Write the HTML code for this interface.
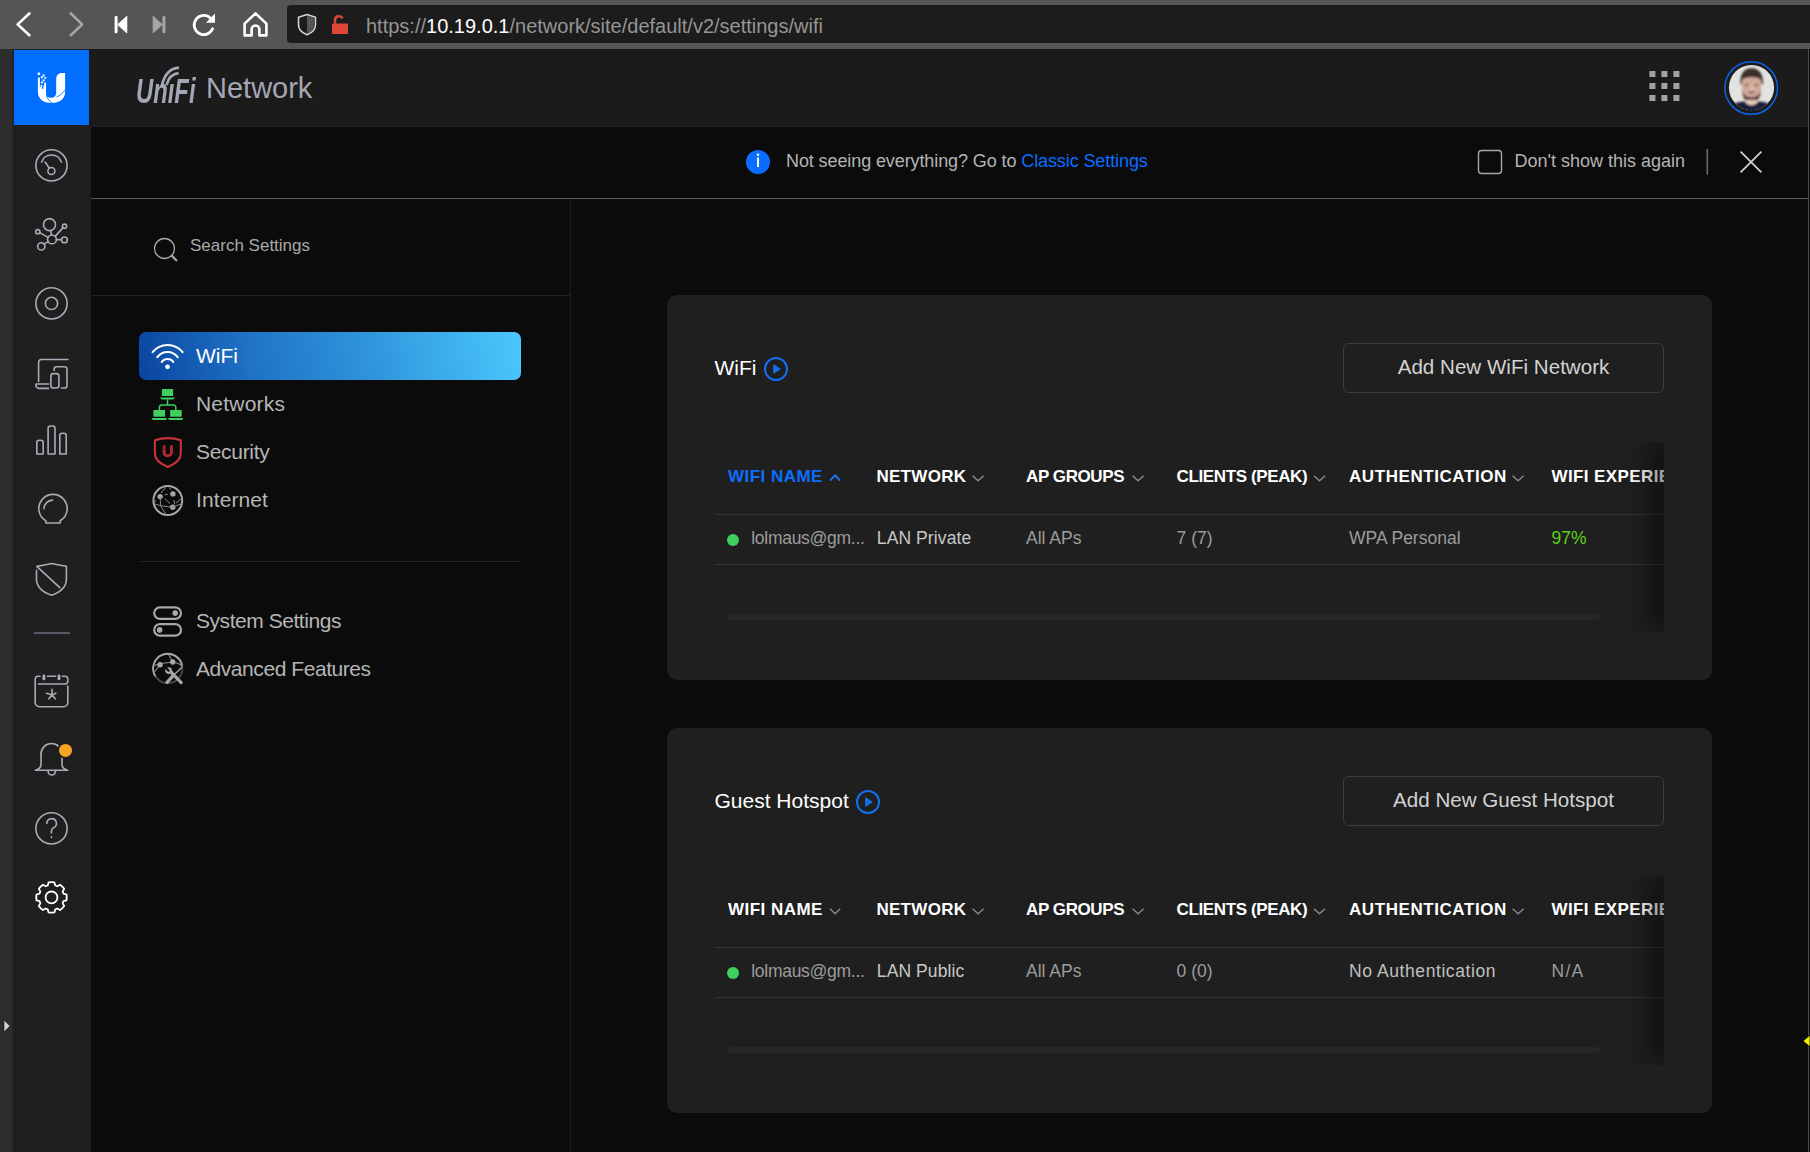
<!DOCTYPE html>
<html><head><meta charset="utf-8"><title>UniFi Network - WiFi</title>
<style>
html,body{margin:0;padding:0;}
body{width:1810px;height:1152px;overflow:hidden;background:#0b0b0b;position:relative;font-family:"Liberation Sans",sans-serif;}
.r{position:absolute;}
.t{position:absolute;white-space:nowrap;line-height:1;}
svg{position:absolute;left:0;top:0;}
</style></head><body>
<div class="r" style="left:0px;top:0px;width:1810px;height:49px;background:#555555;"></div>
<div class="r" style="left:287px;top:5px;width:1523px;height:38px;background:#1c1c1c;border-radius:4px 0 0 4px;"></div>
<div class="t " style="left:366px;top:16.07px;font-size:20px;color:#9e9e9e;font-weight:normal;"><span style="color:#959595">https://</span><span style="color:#ffffff">10.19.0.1</span><span style="color:#959595">/network/site/default/v2/settings/wifi</span></div>
<div class="r" style="left:0px;top:49px;width:12px;height:1103px;background:#2d2d2d;"></div>
<div class="r" style="left:12px;top:49px;width:2px;height:1103px;background:#232323;"></div>
<div class="r" style="left:14px;top:49px;width:76px;height:1103px;background:#1f1f1f;"></div>
<div class="r" style="left:90px;top:49px;width:1px;height:1103px;background:#1c1c28;"></div>
<div class="r" style="left:14px;top:50px;width:75px;height:75px;background:#006fff;"></div>
<div class="r" style="left:89px;top:49px;width:1719px;height:76px;background:#1b1b1b;"></div>
<div class="r" style="left:89px;top:125px;width:1719px;height:2px;background:#1d1d25;"></div>
<div class="r" style="left:1808px;top:49px;width:1px;height:1103px;background:#4c4c4c;"></div>
<div class="t " style="left:135.5px;top:72.57px;font-size:35px;color:#a3a6b3;font-weight:bold;font-style:italic;transform:scaleX(0.68);transform-origin:0 0;">Un&#305;Fi</div>
<div class="t " style="left:206px;top:74.45px;font-size:29px;color:#a3a6b3;font-weight:normal;">Network</div>
<div class="t " style="left:786px;top:152.46px;font-size:18px;color:#b4b4b4;font-weight:normal;letter-spacing:-0.1px;">Not seeing everything? Go to <span style="color:#0a6eff">Classic Settings</span></div>
<div class="t " style="left:1514.6px;top:151.56px;font-size:18px;color:#b4b4b4;font-weight:normal;">Don't show this again</div>
<div class="r" style="left:91px;top:198px;width:1717px;height:1px;background:#5a5a5a;"></div>
<div class="r" style="left:570px;top:199px;width:1px;height:953px;background:#1f1f1f;"></div>
<div class="r" style="left:91px;top:295px;width:479px;height:1px;background:#222222;"></div>
<div class="t " style="left:190px;top:237.21px;font-size:17px;color:#a9a9a9;font-weight:normal;">Search Settings</div>
<div class="r" style="left:139px;top:332px;width:382px;height:48px;background:linear-gradient(78deg,#0a45a0 0%,#1f73c6 30%,#2f95dc 60%,#4ac8fc 100%);border-radius:7px;"></div>
<div class="t " style="left:196px;top:345.32px;font-size:21px;color:#ffffff;font-weight:normal;">WiFi</div>
<div class="t " style="left:196px;top:393.22px;font-size:21px;color:#b6b6b6;font-weight:normal;letter-spacing:0.2px;">Networks</div>
<div class="t " style="left:196px;top:441.22px;font-size:21px;color:#b6b6b6;font-weight:normal;letter-spacing:-0.3px;">Security</div>
<div class="t " style="left:196px;top:489.22px;font-size:21px;color:#b6b6b6;font-weight:normal;letter-spacing:0.1px;">Internet</div>
<div class="t " style="left:196px;top:610.32px;font-size:21px;color:#b6b6b6;font-weight:normal;letter-spacing:-0.45px;">System Settings</div>
<div class="t " style="left:196px;top:658.02px;font-size:21px;color:#b6b6b6;font-weight:normal;letter-spacing:-0.44px;">Advanced Features</div>
<div class="r" style="left:139px;top:561px;width:382px;height:1px;background:#222222;"></div>
<div class="r" style="left:667px;top:295px;width:1045px;height:385px;background:#1f1f1f;border-radius:10px;"></div>
<div class="t " style="left:714.5px;top:357.22px;font-size:21px;color:#ffffff;font-weight:normal;">WiFi</div>
<div class="r" style="left:1343px;top:343px;width:321px;height:50px;background:transparent;box-sizing:border-box;border:1px solid #3d3d3d;border-radius:6px;"></div>
<div class="t" style="left:1343px;width:321px;text-align:center;top:356.56px;font-size:20.6px;color:#d2d2d2;">Add New WiFi Network</div>
<div class="t " style="left:728px;top:467.81px;font-size:17px;color:#0a6eff;font-weight:bold;letter-spacing:0.47px;">WIFI NAME</div>
<div class="t " style="left:876.4px;top:467.81px;font-size:17px;color:#ffffff;font-weight:bold;letter-spacing:0.3px;">NETWORK</div>
<div class="t " style="left:1026px;top:467.81px;font-size:17px;color:#ffffff;font-weight:bold;letter-spacing:-0.4px;">AP GROUPS</div>
<div class="t " style="left:1176.6px;top:467.81px;font-size:17px;color:#ffffff;font-weight:bold;letter-spacing:-0.38px;">CLIENTS (PEAK)</div>
<div class="t " style="left:1349px;top:467.81px;font-size:17px;color:#ffffff;font-weight:bold;letter-spacing:0.57px;">AUTHENTICATION</div>
<div class="t " style="left:1551.5px;top:467.81px;font-size:17px;color:#ffffff;font-weight:bold;letter-spacing:0.4px;">WIFI EXPERIE</div>
<div class="r" style="left:715px;top:514px;width:949px;height:1px;background:#333333;"></div>
<div class="r" style="left:715px;top:564px;width:949px;height:1px;background:#333333;"></div>
<div class="r" style="left:727px;top:534px;width:12px;height:12px;background:#3ecf5e;border-radius:50%;"></div>
<div class="t " style="left:751.2px;top:529.59px;font-size:17.5px;color:#9c9c9c;font-weight:normal;letter-spacing:-0.27px;">lolmaus@gm...</div>
<div class="t " style="left:876.8px;top:529.59px;font-size:17.5px;color:#c8c8c8;font-weight:normal;letter-spacing:0.1px;">LAN Private</div>
<div class="t " style="left:1026px;top:529.59px;font-size:17.5px;color:#9c9c9c;font-weight:normal;letter-spacing:0px;">All APs</div>
<div class="t " style="left:1176.6px;top:529.59px;font-size:17.5px;color:#9c9c9c;font-weight:normal;letter-spacing:0px;">7 (7)</div>
<div class="t " style="left:1349px;top:529.59px;font-size:17.5px;color:#9c9c9c;font-weight:normal;letter-spacing:0px;">WPA Personal</div>
<div class="t " style="left:1551.5px;top:529.59px;font-size:17.5px;color:#5bd41c;font-weight:normal;letter-spacing:0px;">97%</div>
<div class="r" style="left:727px;top:614px;width:873px;height:6px;background:#262626;border-radius:3px;"></div>
<div class="r" style="left:1564px;top:442px;width:100px;height:190px;overflow:hidden;"><div class="r" style="left:100px;top:0;width:30px;height:190px;background:#1f1f1f;box-shadow:-14px 0 26px rgba(0,0,0,0.5);"></div></div>
<div class="r" style="left:1664px;top:395px;width:48px;height:285px;background:#1f1f1f;border-radius:0 0 9px 0;"></div>
<div class="r" style="left:667px;top:728px;width:1045px;height:385px;background:#1f1f1f;border-radius:10px;"></div>
<div class="t " style="left:714.5px;top:790.22px;font-size:21px;color:#ffffff;font-weight:normal;">Guest Hotspot</div>
<div class="r" style="left:1343px;top:776px;width:321px;height:50px;background:transparent;box-sizing:border-box;border:1px solid #3d3d3d;border-radius:6px;"></div>
<div class="t" style="left:1343px;width:321px;text-align:center;top:789.56px;font-size:20.6px;color:#d2d2d2;">Add New Guest Hotspot</div>
<div class="t " style="left:728px;top:900.81px;font-size:17px;color:#ffffff;font-weight:bold;letter-spacing:0.47px;">WIFI NAME</div>
<div class="t " style="left:876.4px;top:900.81px;font-size:17px;color:#ffffff;font-weight:bold;letter-spacing:0.3px;">NETWORK</div>
<div class="t " style="left:1026px;top:900.81px;font-size:17px;color:#ffffff;font-weight:bold;letter-spacing:-0.4px;">AP GROUPS</div>
<div class="t " style="left:1176.6px;top:900.81px;font-size:17px;color:#ffffff;font-weight:bold;letter-spacing:-0.38px;">CLIENTS (PEAK)</div>
<div class="t " style="left:1349px;top:900.81px;font-size:17px;color:#ffffff;font-weight:bold;letter-spacing:0.57px;">AUTHENTICATION</div>
<div class="t " style="left:1551.5px;top:900.81px;font-size:17px;color:#ffffff;font-weight:bold;letter-spacing:0.4px;">WIFI EXPERIE</div>
<div class="r" style="left:715px;top:947px;width:949px;height:1px;background:#333333;"></div>
<div class="r" style="left:715px;top:997px;width:949px;height:1px;background:#333333;"></div>
<div class="r" style="left:727px;top:967px;width:12px;height:12px;background:#3ecf5e;border-radius:50%;"></div>
<div class="t " style="left:751.2px;top:962.59px;font-size:17.5px;color:#9c9c9c;font-weight:normal;letter-spacing:-0.27px;">lolmaus@gm...</div>
<div class="t " style="left:876.8px;top:962.59px;font-size:17.5px;color:#c8c8c8;font-weight:normal;letter-spacing:0.1px;">LAN Public</div>
<div class="t " style="left:1026px;top:962.59px;font-size:17.5px;color:#9c9c9c;font-weight:normal;letter-spacing:0px;">All APs</div>
<div class="t " style="left:1176.6px;top:962.59px;font-size:17.5px;color:#9c9c9c;font-weight:normal;letter-spacing:0px;">0 (0)</div>
<div class="t " style="left:1349px;top:962.59px;font-size:17.5px;color:#c0c0c0;font-weight:normal;letter-spacing:0.58px;">No Authentication</div>
<div class="t " style="left:1551.5px;top:962.59px;font-size:17.5px;color:#9c9c9c;font-weight:normal;letter-spacing:1.3px;">N/A</div>
<div class="r" style="left:727px;top:1047px;width:873px;height:6px;background:#262626;border-radius:3px;"></div>
<div class="r" style="left:1564px;top:875px;width:100px;height:190px;overflow:hidden;"><div class="r" style="left:100px;top:0;width:30px;height:190px;background:#1f1f1f;box-shadow:-14px 0 26px rgba(0,0,0,0.5);"></div></div>
<div class="r" style="left:1664px;top:828px;width:48px;height:285px;background:#1f1f1f;border-radius:0 0 9px 0;"></div>
<svg width="1810" height="1152" viewBox="0 0 1810 1152"><g fill="none" stroke="#ffffff" stroke-width="2.6" stroke-linecap="round" stroke-linejoin="round"><path d="M29.4 13.5 L17.6 24.4 L29.4 35.2"/></g><path d="M70.8 13.5 L82.2 24.4 L70.8 35.2" fill="none" stroke="#a6a6a6" stroke-width="2.6" stroke-linecap="round" stroke-linejoin="round"/><rect x="114.6" y="15.9" width="3" height="17.4" rx="1.2" fill="#fff"/><path d="M117.8 24.6 L126.8 16.3 L126.8 32.9 Z" fill="#fff" stroke="#fff" stroke-width="1" stroke-linejoin="round"/><rect x="162.4" y="15.9" width="3" height="17.4" rx="1.2" fill="#a6a6a6"/><path d="M162.2 24.6 L153.2 16.3 L153.2 32.9 Z" fill="#a6a6a6" stroke="#a6a6a6" stroke-width="1" stroke-linejoin="round"/><path d="M212.6 28.8 A9.6 9.6 0 1 1 210.6 18.2" fill="none" stroke="#fff" stroke-width="2.8" stroke-linecap="round"/><path d="M206 22.8 L215 22.8 L215 13.6 Z" fill="#fff"/><path d="M244.6 35.4 L244.6 23.6 L255.5 13.4 L266.4 23.6 L266.4 35.4 L259.4 35.4 L259.4 29.4 A3.9 3.9 0 0 0 251.6 29.4 L251.6 35.4 Z" fill="none" stroke="#fff" stroke-width="2.6" stroke-linejoin="round"/><path d="M307 14.5 L315.5 17.2 L315.5 25 C315.5 30 311.5 33 307 34.8 C302.5 33 298.5 30 298.5 25 L298.5 17.2 Z" fill="none" stroke="#dcdcd6" stroke-width="1.5"/><path d="M307 15.6 L314.6 18 L314.6 25 C314.6 29.4 311 32 307 33.8 Z" fill="#555"/><rect x="332" y="23.5" width="16" height="10.5" rx="1" fill="#e0453a"/><path d="M335 23.5 L335 20 A4 4 0 0 1 342.6 18.4" fill="none" stroke="#e0453a" stroke-width="2.4"/><g fill="#fff"><path d="M37.9 86 L46 86 L46 94.5 C46 96.8 48.5 97.8 51 97.8 C54 97.8 56.2 96 56.2 92.5 L56.2 79 C56.2 75.5 58.5 73.1 62 73.1 L65.1 73.1 L65.1 92 C65.1 99 59.5 103 51.5 103 C43 103 37.9 98.5 37.9 92 Z"/><rect x="37.7" y="72.6" width="2.4" height="2.4"/><rect x="42.6" y="74.4" width="2" height="2"/><rect x="40.9" y="76.2" width="2" height="2"/><rect x="44.4" y="77" width="1.8" height="1.8"/><rect x="42.6" y="79.4" width="2" height="2"/><rect x="40.9" y="81.6" width="2" height="1.8"/><rect x="37.9" y="77.6" width="2" height="9"/><rect x="44.2" y="82.6" width="1.8" height="4"/><rect x="40.6" y="85" width="2" height="3"/></g><rect x="41.9" y="86" width="1.5" height="2.8" fill="#006fff"/><rect x="39.9" y="86" width="0.8" height="1" fill="#006fff"/><g fill="none" stroke="#006fff" stroke-width="0.9"><path d="M46.6 96.6 C48 99.5 50 101.6 52.2 103"/><path d="M56.6 96.8 C60 95.6 62.8 93.4 64.8 90.2"/></g><g fill="none" stroke="#a9abb7" stroke-width="1.6" stroke-linecap="round" stroke-linejoin="round"><circle cx="51.5" cy="165.4" r="15.6"/><path d="M41.6 162 A10.5 10.5 0 0 1 61.4 162"/><path d="M45.2 162.2 L49.4 168.2"/><circle cx="51.4" cy="171" r="3.5"/></g><g fill="none" stroke="#a9abb7" stroke-width="1.6" stroke-linecap="round" stroke-linejoin="round"><circle cx="49.5" cy="224.6" r="6"/><circle cx="52" cy="239.4" r="4.4"/><circle cx="37.8" cy="231.7" r="2.1"/><circle cx="64.5" cy="226.2" r="2.1"/><circle cx="64.4" cy="239.9" r="2.9"/><circle cx="41.3" cy="246.4" r="3.6"/><path d="M50.8 230.6 L51.4 235"/><path d="M39.7 232.6 L48 237.4"/><path d="M63 227.6 L55.2 236.4"/><path d="M56.4 239.6 L61.5 239.8"/><path d="M44.2 244.2 L48.4 241.4"/></g><g fill="none" stroke="#a9abb7" stroke-width="1.6" stroke-linecap="round" stroke-linejoin="round"><circle cx="51.5" cy="303.4" r="15.6"/><circle cx="51.5" cy="303.4" r="6.1"/></g><g fill="none" stroke="#a9abb7" stroke-width="1.6" stroke-linecap="round" stroke-linejoin="round"><path d="M67.9 359.5 L41.6 359.5 A3 3 0 0 0 38.6 362.5 L38.6 381.6"/><path d="M48.6 384 L36 384 L36 385.4 A3 3 0 0 0 39 388.4 L48.6 388.4"/><path d="M54.1 370.4 L54.1 369.4 A2.6 2.6 0 0 1 56.7 366.8 L64.4 366.8 A2.6 2.6 0 0 1 67 369.4 L67 385.4 A2.6 2.6 0 0 1 64.4 388 L61.4 388"/><rect x="50.9" y="373.6" width="8" height="14.4" rx="2.4"/></g><g fill="none" stroke="#a9abb7" stroke-width="1.6" stroke-linecap="round" stroke-linejoin="round"><path d="M36.8 454 L36.8 442.6 A2.6 2.6 0 0 1 42.6 442.6 L43.2 454 Z" style="display:none"/><path d="M36.8 454 L36.8 442.6 A2.4 2.4 0 0 1 39.2 440.2 L40.8 440.2 A2.4 2.4 0 0 1 43.2 442.6 L43.2 454 Z"/><path d="M48.1 454 L48.1 428.4 A2.4 2.4 0 0 1 50.5 426 L52.6 426 A2.4 2.4 0 0 1 55 428.4 L55 454 Z"/><path d="M59.8 454 L59.8 435.6 A2.4 2.4 0 0 1 62.2 433.2 L63.8 433.2 A2.4 2.4 0 0 1 66.2 435.6 L66.2 454 Z"/></g><g fill="none" stroke="#a9abb7" stroke-width="1.6" stroke-linecap="round" stroke-linejoin="round"><path d="M45.8 520.8 A14.2 14.2 0 1 1 60.2 520.8 L60.2 523 L45.8 523 Z"/><path d="M43.9 508.6 A9 9 0 0 1 52.6 500.1"/></g><g fill="none" stroke="#a9abb7" stroke-width="1.6" stroke-linecap="round" stroke-linejoin="round"><path d="M36.5 570.4 L36.5 579 C36.5 587 43.5 592.5 51.6 595.2 C59.7 592.5 66.4 587 66.4 579 L66.4 566.2 C60 565.6 55.5 564.6 51.6 563.6 C47.7 564.6 43 565.6 36.8 566.4 L59.8 587.6"/></g><rect x="34" y="632" width="35.8" height="2" fill="#575a66"/><g fill="none" stroke="#a9abb7" stroke-width="1.6" stroke-linecap="round" stroke-linejoin="round"><path d="M40 676.2 L38.2 676.2 A3 3 0 0 0 35.2 679.2 L35.2 702.5 A4.2 4.2 0 0 0 39.4 706.7 L63.6 706.7 A4.2 4.2 0 0 0 67.8 702.5 L67.8 686"/><path d="M38.4 684 L64.8 684 A3 3 0 0 0 67.8 681 L67.8 679.2 A3 3 0 0 0 64.8 676.2 L62.4 676.2"/><path d="M47.4 676.2 L55.6 676.2"/><path d="M52 689.4 L52 695 M46.6 693.2 L52 695 L55.8 693.2 M48.8 698.8 L52 695 L55.4 698.8"/></g><rect x="42.5" y="674.6" width="2.8" height="5.6" rx="1.2" fill="#a9abb7"/><rect x="57.6" y="674.6" width="2.8" height="5.6" rx="1.2" fill="#a9abb7"/><g fill="none" stroke="#a9abb7" stroke-width="1.6" stroke-linecap="round" stroke-linejoin="round"><path d="M41 764.4 L41 754 A10.5 10.5 0 0 1 62 754 L62 764.4 C62 767.4 64 769 67.6 770.2 L35.4 770.2 C39 769 41 767.4 41 764.4 Z"/><path d="M48.2 771.4 A3.6 3.6 0 0 0 55.4 771.4"/></g><circle cx="65.5" cy="750.4" r="8.2" fill="#1f1f1f"/><circle cx="65.5" cy="750.4" r="6.5" fill="#f5a623"/><g fill="none" stroke="#a9abb7" stroke-width="1.6" stroke-linecap="round" stroke-linejoin="round"><circle cx="51.5" cy="828.4" r="15.6"/><path d="M46.8 823.4 A4.8 4.8 0 1 1 53.6 827.8 C52 828.6 51.4 829.6 51.4 831 L51.4 833"/></g><circle cx="51.4" cy="837.2" r="1" fill="#a9abb7"/><path d="M47.69 885.50 L48.61 882.38 A15.3 15.3 0 0 1 54.39 882.38 L55.31 885.50 A12.5 12.5 0 0 1 57.22 886.29 L57.22 886.29 L60.08 884.73 A15.3 15.3 0 0 1 64.17 888.82 L62.61 891.68 A12.5 12.5 0 0 1 63.40 893.59 L63.40 893.59 L66.52 894.51 A15.3 15.3 0 0 1 66.52 900.29 L63.40 901.21 A12.5 12.5 0 0 1 62.61 903.12 L62.61 903.12 L64.17 905.98 A15.3 15.3 0 0 1 60.08 910.07 L57.22 908.51 A12.5 12.5 0 0 1 55.31 909.30 L55.31 909.30 L54.39 912.42 A15.3 15.3 0 0 1 48.61 912.42 L47.69 909.30 A12.5 12.5 0 0 1 45.78 908.51 L45.78 908.51 L42.92 910.07 A15.3 15.3 0 0 1 38.83 905.98 L40.39 903.12 A12.5 12.5 0 0 1 39.60 901.21 L39.60 901.21 L36.48 900.29 A15.3 15.3 0 0 1 36.48 894.51 L39.60 893.59 A12.5 12.5 0 0 1 40.39 891.68 L40.39 891.68 L38.83 888.82 A15.3 15.3 0 0 1 42.92 884.73 L45.78 886.29 A12.5 12.5 0 0 1 47.69 885.50 Z" fill="none" stroke="#ffffff" stroke-width="1.8" stroke-linejoin="round"/><circle cx="51.5" cy="897.4" r="5.9" fill="none" stroke="#fff" stroke-width="1.8"/><path d="M4 1020 L10 1026 L4 1032 Z" fill="#d4d0c8" stroke="#111" stroke-width="0.6"/><path d="M1803 1041 L1810 1035 L1810 1047 Z" fill="#f0f000" stroke="#000" stroke-width="0.8"/><rect x="1649.4" y="71.0" width="6" height="6" fill="#a3a3a3"/><rect x="1649.4" y="83.0" width="6" height="6" fill="#a3a3a3"/><rect x="1649.4" y="95.0" width="6" height="6" fill="#a3a3a3"/><rect x="1661.4" y="71.0" width="6" height="6" fill="#a3a3a3"/><rect x="1661.4" y="83.0" width="6" height="6" fill="#a3a3a3"/><rect x="1661.4" y="95.0" width="6" height="6" fill="#a3a3a3"/><rect x="1673.4" y="71.0" width="6" height="6" fill="#a3a3a3"/><rect x="1673.4" y="83.0" width="6" height="6" fill="#a3a3a3"/><rect x="1673.4" y="95.0" width="6" height="6" fill="#a3a3a3"/><circle cx="1751.2" cy="88" r="26.3" fill="none" stroke="#0d63e6" stroke-width="1.5"/><defs><clipPath id="av"><circle cx="1751.5" cy="87.6" r="22.6"/></clipPath><filter id="bl"><feGaussianBlur stdDeviation="0.9"/></filter></defs><g clip-path="url(#av)"><rect x="1728" y="64" width="48" height="48" fill="#e2e2e0"/><g filter="url(#bl)"><path d="M1740.6 85 C1739.6 75 1743 68.4 1751.5 68.2 C1760 68.4 1763.8 75 1762.8 85 L1760.6 83 L1742.6 83 Z" fill="#3a2d27"/><path d="M1742 81 C1742 78.4 1746 77.2 1751.5 77.2 C1757 77.2 1761 78.4 1761 81 L1761 92 C1761 99.5 1756.5 102.6 1751.5 102.6 C1746.5 102.6 1742 99.5 1742 92 Z" fill="#cfa999"/><ellipse cx="1746.8" cy="85" rx="2.2" ry="1.1" fill="#8a6a60"/><ellipse cx="1756.4" cy="85" rx="2.2" ry="1.1" fill="#8a6a60"/><ellipse cx="1751.5" cy="88" rx="1.8" ry="3" fill="#ddb9ab"/><path d="M1742.4 91 C1743 99 1747 102.8 1751.5 102.8 C1756 102.8 1760 99 1760.6 91 C1758.6 95.6 1755.6 97.6 1751.5 97.6 C1747.4 97.6 1744.4 95.6 1742.4 91 Z" fill="#4a3b35"/><path d="M1747.6 92.4 C1749.5 91.2 1753.5 91.2 1755.4 92.4 C1753.5 93.4 1749.5 93.4 1747.6 92.4 Z" fill="#6b4943"/><path d="M1747.2 96.4 C1749.4 97.6 1753.6 97.6 1755.8 96.4 C1754 95.8 1749 95.8 1747.2 96.4 Z" fill="#b98a82"/><rect x="1745.5" y="100" width="12" height="9" fill="#e3c7b6"/><path d="M1728 112 L1732 105 C1736 102.5 1741 101.6 1745 101.2 C1747 106.6 1756 106.6 1758 101.2 C1762 101.6 1767 102.5 1771 105 L1775 112 Z" fill="#1e1d3c"/></g></g><circle cx="758" cy="162" r="12" fill="#0b6dff"/><rect x="757" y="157.5" width="2" height="9.5" fill="#fff"/><circle cx="758" cy="154.8" r="1.2" fill="#fff"/><rect x="1478.5" y="150.5" width="23" height="23" rx="3" fill="none" stroke="#a8a8a8" stroke-width="1.4"/><rect x="1706.5" y="149" width="1.6" height="25.6" fill="#6a6a6a"/><path d="M1740.6 151.6 L1761.4 172.4 M1761.4 151.6 L1740.6 172.4" stroke="#cfcfcf" stroke-width="1.8" fill="none"/><circle cx="164.5" cy="248.5" r="10" fill="none" stroke="#a8a8a8" stroke-width="1.3"/><path d="M171.6 255.6 L177 261" stroke="#a8a8a8" stroke-width="2.2" fill="none"/><g fill="none" stroke="#fff" stroke-width="2.1" stroke-linecap="round"><path d="M152.6 352.2 A19.3 19.3 0 0 1 182.6 352.2"/><path d="M157.3 357.2 A12.5 12.5 0 0 1 177.7 357.2"/><path d="M161.8 361.8 A7.2 7.2 0 0 1 173.3 361.8"/></g><circle cx="167.5" cy="366.8" r="2.4" fill="#fff"/><g fill="#3ecf5e"><rect x="161.9" y="389.1" width="11.2" height="6.9" rx="0.6"/><path d="M160.1 397.4 L174.8 397.4 C174.4 399 173.4 399.4 172 399.4 L163 399.4 C161.6 399.4 160.5 399 160.1 397.4 Z"/><rect x="153.4" y="409.9" width="11.7" height="6.9" rx="0.6"/><rect x="170.1" y="409.9" width="11.6" height="6.9" rx="0.6"/><path d="M151.9 418 L166.8 418 L166.2 419.9 L152.6 419.9 Z"/><path d="M168.2 418 L183.1 418 L182.4 419.9 L168.8 419.9 Z"/></g><g fill="none" stroke="#3ecf5e" stroke-width="1.5"><path d="M167.5 399.4 L167.5 405.1"/><path d="M159.4 410.2 L159.4 407.4 A2.2 2.2 0 0 1 161.6 405.1 L173.6 405.1 A2.2 2.2 0 0 1 175.8 407.4 L175.8 410.2"/></g><path d="M154.9 440.3 C159 438.9 163.5 438.1 167.8 438.1 C172.1 438.1 176.6 438.9 180.8 440.3 L180.8 453.8 C180.8 459 176 463.6 167.8 467 C159.6 463.6 154.9 459 154.9 453.8 Z" fill="none" stroke="#c9333b" stroke-width="2.1" stroke-linejoin="round"/><path d="M162.6 445.3 L165.6 445.3 L165.6 452.4 C165.6 453.8 166.6 454.3 167.8 454.3 C169 454.3 170 453.8 170 452.4 L170 445.3 L172.9 445.3 L172.9 452.2 C172.9 455.4 170.8 457 167.8 457 C164.8 457 162.6 455.4 162.6 452.2 Z" fill="#b22b32"/><g fill="#0b0b0b"><rect x="163.2" y="446.4" width="0.8" height="0.8"/><rect x="164.4" y="447.8" width="0.8" height="0.8"/><rect x="163.4" y="449.2" width="0.8" height="1"/></g><g fill="none" stroke="#a8a8a8" stroke-width="2"><circle cx="167.8" cy="500.5" r="14.4"/></g><g fill="#a8a8a8"><circle cx="160.1" cy="496.6" r="2.7"/><circle cx="172.9" cy="493.9" r="2.7"/><circle cx="172.7" cy="507.3" r="2.7"/></g><g fill="none" stroke="#8a8a8a" stroke-width="1"><path d="M160.1 496.6 L160.6 506 M155 504 C160 506 166 506.5 172.7 507.3 L183 503 M164.8 494.9 L167.8 494.2 M164.6 498.5 L170 503.6 M174 500 L174.6 504.4 M160.6 506 L166 514.5 M176 503 L182 498.2 M161 493 L165.6 487.4 M169 487.6 L171.2 489.6 M154.2 502.8 L156 500.4"/></g><g fill="none" stroke="#a8a8a8" stroke-width="2.2"><rect x="154.2" y="607.3" width="26.8" height="11.6" rx="5.8"/><rect x="154.2" y="624.1" width="26.8" height="11.6" rx="5.8"/></g><g fill="#a8a8a8"><circle cx="175.2" cy="613.1" r="2.8"/><circle cx="159.6" cy="629.9" r="2.8"/></g><g fill="none" stroke-width="1.8"><circle cx="167.8" cy="668.5" r="14.6" stroke="#4a4a4a"/><path d="M155.4 676.2 A14.6 14.6 0 1 1 182.2 666.4" stroke="#a8a8a8"/></g><g fill="none" stroke="#8a8a8a" stroke-width="1.1"><path d="M153.6 665.6 C159 664 166 662.5 172.7 662 C176 662.6 180 664 182.4 666 M168.6 654.6 L172.7 662 M154.4 672 L160.1 664.7"/></g><g fill="#a8a8a8"><circle cx="160.1" cy="664.7" r="2.7"/><circle cx="172.7" cy="662" r="2.7"/></g><g fill="none" stroke="#a8a8a8" stroke-linecap="round"><path d="M167 682.4 L173.4 675.4" stroke-width="3.2"/><path d="M173.4 675.4 L181.6 667.6" stroke-width="1.4"/><path d="M170.6 671.6 L181.2 682.6" stroke-width="3.2"/></g><circle cx="168.6" cy="670.6" r="3.4" fill="#a8a8a8"/><path d="M165.2 667.2 L168.6 670.6" stroke="#0b0b0b" stroke-width="2.2" stroke-linecap="round"/><circle cx="776" cy="369" r="11" fill="none" stroke="#1270f0" stroke-width="2"/><path d="M773.2 364 L781 369 L773.2 374 Z" fill="#1270f0"/><circle cx="868" cy="802" r="11" fill="none" stroke="#1270f0" stroke-width="2"/><path d="M865.2 797 L873 802 L865.2 807 Z" fill="#1270f0"/><path d="M830 480.6 L835.1 475.4 L840.2 480.6" fill="none" stroke="#1a7bff" stroke-width="1.8"/><path d="M972.6 475.8 L978.1 480.8 L983.6 475.8" fill="none" stroke="#8a8a8a" stroke-width="1.4"/><path d="M1132.6 475.8 L1138.1 480.8 L1143.6 475.8" fill="none" stroke="#8a8a8a" stroke-width="1.4"/><path d="M1314 475.8 L1319.5 480.8 L1325 475.8" fill="none" stroke="#8a8a8a" stroke-width="1.4"/><path d="M1512.6 475.8 L1518.1 480.8 L1523.6 475.8" fill="none" stroke="#8a8a8a" stroke-width="1.4"/><path d="M830 908.8 L835.1 913.8 L840.2 908.8" fill="none" stroke="#8a8a8a" stroke-width="1.4"/><path d="M972.6 908.8 L978.1 913.8 L983.6 908.8" fill="none" stroke="#8a8a8a" stroke-width="1.4"/><path d="M1132.6 908.8 L1138.1 913.8 L1143.6 908.8" fill="none" stroke="#8a8a8a" stroke-width="1.4"/><path d="M1314 908.8 L1319.5 913.8 L1325 908.8" fill="none" stroke="#8a8a8a" stroke-width="1.4"/><path d="M1512.6 908.8 L1518.1 913.8 L1523.6 908.8" fill="none" stroke="#8a8a8a" stroke-width="1.4"/></svg>
<svg width="1810" height="1152" viewBox="0 0 1810 1152"><g fill="none" stroke="#a3a6b3" stroke-width="2.8" stroke-linecap="butt"><path d="M162 85 C165 73 172 68 179 67.6"/><path d="M166.6 85 C168.4 78 173 73.8 178.6 73.2"/></g></svg>
</body></html>
